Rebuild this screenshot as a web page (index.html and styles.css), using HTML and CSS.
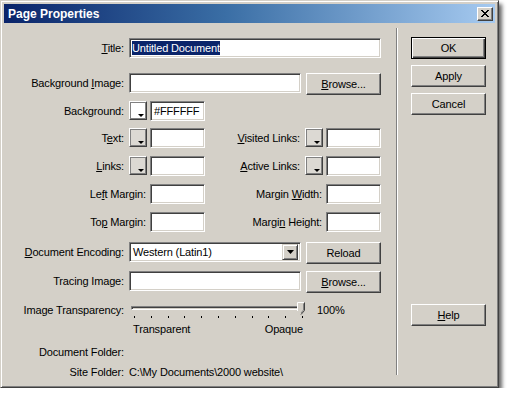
FILE: index.html
```html
<!DOCTYPE html>
<html lang="en">

<head>
    <meta charset="UTF-8">
    <title>Page Properties</title>
    <link rel="stylesheet" href="styles.css">
</head>

<body>
    <div class="window">
        <div class="titlebar">
            <span class="caption">Page Properties</span>
            <span class="close">
                <svg width="8" height="7" viewBox="0 0 8 7">
                    <path d="M0 0h2v1h1v1h2v-1h1v-1h2v1h-1v1h-1v1h-1v1h1v1h1v1h1v1h-2v-1h-1v-1h-2v1h-1v1h-2v-1h1v-1h1v-1h1v-1h-1v-1h-1v-1h-1z" fill="#000"/>
                </svg>
            </span>
        </div>
        <div class="content">
            <div class="form">
                <div class="row mt15">
                    <span class="lbl"><u>T</u>itle:</span>
                    <span class="field w-title"><span class="selected">Untitled Document</span></span>
                </div>
                <div class="row tall mt15">
                    <span class="lbl">Background <u>I</u>mage:</span>
                    <span class="field w-mid"></span>
                    <span class="btn"><span><u>B</u>rowse...</span></span>
                </div>
                <div class="row mt6">
                    <span class="lbl">Background:</span>
                    <span class="swatch white"></span>
                    <span class="field w-small">#FFFFFF</span>
                </div>
                <div class="row mt7">
                    <span class="lbl">T<u>e</u>xt:</span>
                    <span class="swatch"></span>
                    <span class="field w-small"></span>
                    <span class="lbl lbl-right"><u>V</u>isited Links:</span>
                    <span class="swatch"></span>
                    <span class="field w-small"></span>
                </div>
                <div class="row mt8">
                    <span class="lbl"><u>L</u>inks:</span>
                    <span class="swatch"></span>
                    <span class="field w-small"></span>
                    <span class="lbl lbl-right"><u>A</u>ctive Links:</span>
                    <span class="swatch"></span>
                    <span class="field w-small"></span>
                </div>
                <div class="row mt8">
                    <span class="lbl lbl-margin">Le<u>f</u>t Margin:</span>
                    <span class="field w-small"></span>
                    <span class="lbl lbl-margin-right">Margin <u>W</u>idth:</span>
                    <span class="field w-small"></span>
                </div>
                <div class="row mt8">
                    <span class="lbl lbl-margin">To<u>p</u> Margin:</span>
                    <span class="field w-small"></span>
                    <span class="lbl lbl-margin-right">Margi<u>n</u> Height:</span>
                    <span class="field w-small"></span>
                </div>
                <div class="row tall mt10">
                    <span class="lbl"><u>D</u>ocument Encoding:</span>
                    <span class="field select w-mid">
                        <span>Western (Latin1)</span>
                        <span class="drop">
                            <svg width="7" height="4" viewBox="0 0 7 4"><path d="M0 0h7l-3.5 4z" fill="#000"/></svg>
                        </span>
                    </span>
                    <span class="btn"><span>Reload</span></span>
                </div>
                <div class="row tall mt7">
                    <span class="lbl">Tracing Image:</span>
                    <span class="field w-mid"></span>
                    <span class="btn"><span><u>B</u>rowse...</span></span>
                </div>
                <div class="row mt7">
                    <span class="lbl">Image Transparency:</span>
                    <div class="slider">
                        <div class="track"></div>
                        <div class="ticks">
                            <i></i><i></i><i></i><i></i><i></i><i></i><i></i><i></i><i></i><i></i><i></i>
                        </div>
                        <svg class="thumb" width="8" height="13" viewBox="0 0 8 13">
                            <path d="M0.5 0.5h7v8l-3.5 4l-3.5-4z" fill="#d4d0c8"/>
                            <path d="M0.5 9v-8.5h6.5" fill="none" stroke="#fff"/>
                            <path d="M7.5 0.5v8l-3.5 4" fill="none" stroke="#404040"/>
                            <path d="M6.5 1.5v6.5l-2.5 3" fill="none" stroke="#808080"/>
                        </svg>
                    </div>
                    <span class="percent">100%</span>
                </div>
                <div class="row short mt2">
                    <div class="scale-labels">
                        <span>Transparent</span>
                        <span>Opaque</span>
                    </div>
                </div>
                <div class="row short mt9">
                    <span class="lbl">Document Folder:</span>
                </div>
                <div class="row short mt6">
                    <span class="lbl">Site Folder:</span>
                    <span class="value">C:\My Documents\2000 website\</span>
                </div>
            </div>
            <div class="divider"></div>
            <div class="side">
                <span class="btn default"><span>OK</span></span>
                <span class="btn gap"><span>Apply</span></span>
                <span class="btn gap"><span>Cancel</span></span>
                <span class="btn help"><span><u>H</u>elp</span></span>
            </div>
        </div>
    </div>
</body>

</html>
```

FILE: styles.css
```css
body {
    margin: 0;
    background: #fff;
    font-family: "Liberation Sans", Arial, sans-serif;
    font-size: 11px;
    letter-spacing: -0.15px;
    color: #000;
}

.window {
    width: 499px;
    height: 388px;
    box-sizing: border-box;
    padding: 3px;
    background: #d4d0c8;
    border: 1px solid;
    border-color: #d4d0c8 #404040 #404040 #d4d0c8;
    box-shadow: inset 1px 1px #fff, inset -1px -1px #808080, 3px 4px 4px rgba(0, 0, 0, 0.6);
}

.titlebar {
    height: 19px;
    display: flex;
    align-items: center;
    justify-content: space-between;
    padding: 0 2px 0 4px;
    background: linear-gradient(to right, #0a246a, #3a6ea5 45%, #a6caf0);
}

.caption {
    color: #fff;
    font-weight: bold;
    font-size: 12px;
    letter-spacing: 0;
}

.close {
    width: 16px;
    height: 14px;
    box-sizing: border-box;
    display: flex;
    align-items: center;
    justify-content: center;
    background: #d4d0c8;
    border: 1px solid;
    border-color: #fff #404040 #404040 #fff;
    box-shadow: inset -1px -1px #808080;
}

.content {
    display: flex;
    height: 361px;
}

.form {
    width: 392px;
}

.row {
    display: flex;
    align-items: flex-start;
    height: 20px;
}

.row.tall {
    height: 22px;
}

.row.short {
    height: 14px;
    align-items: center;
}

.mt2 { margin-top: 2px; }
.mt6 { margin-top: 6px; }
.mt7 { margin-top: 7px; }
.mt8 { margin-top: 8px; }
.mt9 { margin-top: 9px; }
.mt10 { margin-top: 10px; }
.mt15 { margin-top: 15px; }

.lbl {
    width: 120px;
    margin-right: 5px;
    flex: none;
    text-align: right;
    line-height: 20px;
    white-space: nowrap;
}

.row.short .lbl {
    line-height: 14px;
}

.lbl-right {
    width: 95px;
}

.lbl-margin {
    width: 142px;
    margin-right: 4px;
}

.lbl-margin-right {
    width: 117px;
    margin-right: 4px;
}

.field {
    height: 20px;
    box-sizing: border-box;
    flex: none;
    padding: 0 2px;
    background: #fff;
    border: 1px solid;
    border-color: #808080 #fff #fff #808080;
    box-shadow: inset 1px 1px #404040, inset -1px -1px #d4d0c8;
    line-height: 18px;
    white-space: nowrap;
    overflow: hidden;
}

.w-title { width: 252px; }
.w-mid { width: 172px; }
.w-small { width: 55px; padding-left: 3px; }

.selected {
    background: #0a246a;
    color: #fff;
    padding: 1px 0;
}

.select {
    display: flex;
    align-items: center;
    padding: 0 2px 0 3px;
}

.drop {
    margin-left: auto;
    width: 16px;
    height: 16px;
    box-sizing: border-box;
    display: flex;
    align-items: center;
    justify-content: center;
    background: #d4d0c8;
    border: 1px solid;
    border-color: #d4d0c8 #404040 #404040 #d4d0c8;
    box-shadow: inset 1px 1px #fff, inset -1px -1px #808080;
}

.btn {
    width: 75px;
    height: 22px;
    box-sizing: border-box;
    flex: none;
    margin-left: 5px;
    display: flex;
    align-items: center;
    justify-content: center;
    background: #d4d0c8;
    border: 1px solid;
    border-color: #fff #404040 #404040 #fff;
    box-shadow: inset -1px -1px #808080;
}

.btn.default {
    border-color: #000;
    box-shadow: inset 1px 1px #fff, inset -1px -1px #404040, inset -2px -2px #808080;
}

.swatch {
    position: relative;
    width: 18px;
    height: 19px;
    box-sizing: border-box;
    flex: none;
    margin-right: 3px;
    background: #dcd9d3;
    border: 1px solid;
    border-color: #fff #404040 #404040 #fff;
    box-shadow: inset -1px -1px #808080, inset 1px 1px #808080;
}

.swatch.white {
    background: #fff;
}

.swatch::after {
    content: "";
    position: absolute;
    right: 2px;
    bottom: 2px;
    border-left: 3px solid transparent;
    border-right: 3px solid transparent;
    border-top: 3px solid #000;
}

.slider {
    position: relative;
    width: 176px;
    height: 20px;
    flex: none;
}

.track {
    margin: 6px 0 0 2px;
    width: 172px;
    height: 4px;
    box-sizing: border-box;
    border: 1px solid;
    border-color: #808080 #fff #fff #808080;
    box-shadow: inset 1px 1px #404040;
}

.ticks {
    display: flex;
    justify-content: space-between;
    margin: 6px 0 0 5px;
    width: 169px;
}

.ticks i {
    width: 1px;
    height: 2px;
    background: #000;
}

.thumb {
    position: absolute;
    left: 168px;
    top: 2px;
}

.percent {
    margin-left: 12px;
    line-height: 20px;
}

.scale-labels {
    display: flex;
    justify-content: space-between;
    width: 176px;
    margin-left: 125px;
    padding: 0 2px 0 4px;
    box-sizing: border-box;
}

.value {
    white-space: nowrap;
}

.divider {
    width: 2px;
    height: 347px;
    margin-top: 5px;
    box-sizing: border-box;
    border-left: 1px solid #808080;
    border-right: 1px solid #fff;
}

.side {
    display: flex;
    flex-direction: column;
    padding: 14px 0 0 8px;
}

.side .btn.gap {
    margin-top: 6px;
}

.side .btn.help {
    margin-top: 189px;
}
```
